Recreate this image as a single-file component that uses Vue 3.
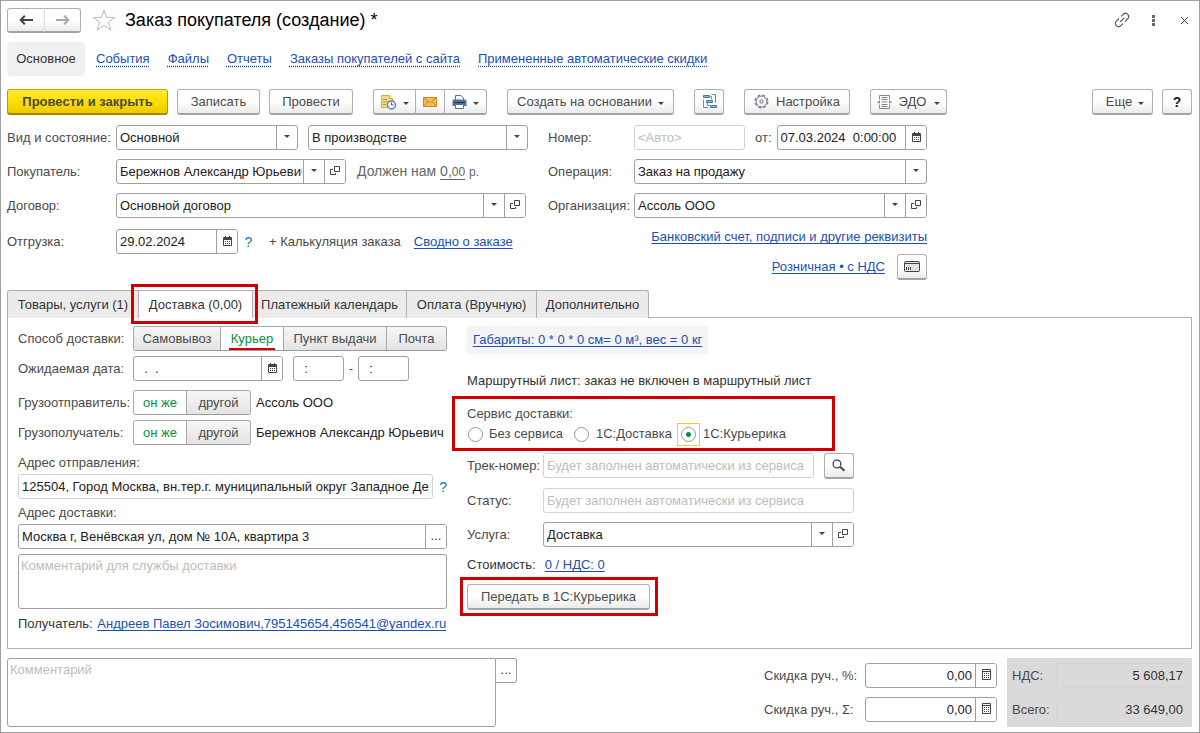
<script setup>
import { ref } from 'vue'

const navLinks = ['События', 'Файлы', 'Отчеты', 'Заказы покупателей с сайта', 'Примененные автоматические скидки']
const deliveryMethods = ['Самовывоз', 'Курьер', 'Пункт выдачи', 'Почта']
const services = ['Без сервиса', '1С:Доставка', '1С:Курьерика']
const parties = ['он же', 'другой']

const method = ref('Курьер')
const service = ref('1С:Курьерика')
const sender = ref('он же')
const receiver = ref('он же')
const date = ref('29.02.2024')
const orderDate = ref('07.03.2024  0:00:00')
const expected = ref('  .  .')
const timeFrom = ref('  :')
const timeTo = ref('  :')
const addressFrom = ref('125504, Город Москва, вн.тер.г. муниципальный округ Западное Дегунино')
const addressTo = ref('Москва г, Венёвская ул, дом № 10А, квартира 3')
const discountPercent = ref('0,00')
const discountSum = ref('0,00')
</script>

<template>
  <svg class="defs" aria-hidden="true">
    <symbol id="i-caret" viewBox="0 0 6 3"><path d="M0 0h6L3 3z" fill="#444" /></symbol>
    <symbol id="i-open" viewBox="0 0 10 10">
      <path d="M4.500 .5h5v5h-5zM3 3.500H.5v5h5V7" fill="none" stroke="#444" />
    </symbol>
    <symbol id="i-cal" viewBox="0 0 9 10">
      <path d="M1 1h1V0h1v1h3V0h1v1h1q1 0 1 1v7q0 1-1 1H1q-1 0-1-1V2q0-1 1-1z" fill="#444" />
      <path d="M1 4h7v5H1z" fill="#fff" />
      <path d="M2 5.500h5M2 7.500h5" stroke="#444" stroke-dasharray="1 1" />
    </symbol>
    <symbol id="i-calc" viewBox="0 0 9 11">
      <path d="M.5 .5h8v10h-8zM.5 2.500h8" fill="none" stroke="#444" />
      <path d="M2 4.500h5M2 6.500h5M2 8.500h5" stroke="#444" stroke-dasharray="1 1" />
    </symbol>
  </svg>

  <main class="window">
    <header class="title-bar">
      <div class="group-btn history">
        <button class="btn" aria-label="Назад">
          <svg width="14" height="10" viewBox="0 0 14 10"><path d="M14 5H3M5.800 .8 1.700 5l4.100 4.200" fill="none" stroke="#444" stroke-width="2" /></svg>
        </button>
        <button class="btn" aria-label="Вперед">
          <svg width="14" height="10" viewBox="0 0 14 10"><path d="M0 5h11M8.200 .8 12.300 5 8.200 9.200" fill="none" stroke="#aaa" stroke-width="2" /></svg>
        </button>
      </div>
      <button class="plain" aria-label="В избранное">
        <svg width="24" height="22" viewBox="0 0 24 22"><path d="M12 1l2.700 7.400h8L16.300 13.200l2.500 7.900L12 16.400l-6.800 4.700 2.500-7.900L1.300 8.400h8z" fill="#fff" stroke="#b4bac2" /></svg>
      </button>
      <h1>Заказ покупателя (создание) *</h1>
      <div class="window-tools">
        <button class="plain" aria-label="Ссылка">
          <svg width="16" height="16" viewBox="0 0 16 16"><g fill="none" stroke="#555" stroke-width="1.200" transform="rotate(-45 8 8)"><path d="M7 4.800H3.200a3.200 3.200 0 0 0 0 6.400H6M9 11.200h3.800a3.200 3.200 0 0 0 0-6.400H10M5 8h6" /></g></svg>
        </button>
        <button class="plain" aria-label="Меню">
          <svg width="3" height="11" viewBox="0 0 3 11"><path d="M0 0h3v3H0zM0 4h3v3H0zM0 8h3v3H0z" fill="#666" /></svg>
        </button>
        <button class="plain" aria-label="Закрыть">
          <svg width="7" height="7" viewBox="0 0 7 7"><path d="M0 0l7 7M7 0L0 7" stroke="#444" /></svg>
        </button>
      </div>
    </header>

    <nav class="nav">
      <a class="current" href="#main">Основное</a>
      <a v-for="link in navLinks" :key="link" class="dotted" href="#">{{ link }}</a>
    </nav>

    <div class="toolbar">
      <div class="set">
        <button class="btn primary">Провести и закрыть</button>
        <button class="btn save">Записать</button>
        <button class="btn post">Провести</button>
      </div>
      <div class="group-btn">
        <button class="btn wide-icon" aria-label="Напоминание">
          <svg width="17" height="16" viewBox="0 0 17 16">
            <path d="M1.500 1.500h8l3 3v9h-11z" fill="#f3dc85" stroke="#d2ae45" /><path d="M9.500 1.500v3h3" fill="#fff3bd" stroke="#d2ae45" />
            <path d="M3 5.500h4M3 8h5M3 10.500h3" stroke="#b9933a" />
            <circle cx="11.500" cy="11" r="4" fill="#eef6ff" stroke="#5285b4" stroke-width="1.400" /><path d="M11.500 8.500V11h2" fill="none" stroke="#d23" />
          </svg>
          <svg class="caret" width="6" height="3"><use href="#i-caret" /></svg>
        </button>
        <button class="btn mail" aria-label="Письмо">
          <svg width="14" height="10" viewBox="0 0 14 10"><path d="M.5 .5h13v9H.5z" fill="#f6bd5a" stroke="#c98820" /><path d="M.5 .5 7 6l6.500-5.500M.5 9.500l4.500-5M13.500 9.500 9 4.500" fill="none" stroke="#c98820" /></svg>
        </button>
        <button class="btn wide-icon" aria-label="Печать">
          <svg width="15" height="14" viewBox="0 0 15 14">
            <path d="M3.500 5V.5h5.500L11.500 3v2" fill="#fff" stroke="#56738f" /><path d="M2 4.500h11q1.500 0 1.500 1.500v5H.5V6Q.5 4.500 2 4.500z" fill="#4d7599" />
            <path d="M2 7.500h11" stroke="#22384d" /><path d="M3.500 9.500h8v4h-8z" fill="#fff" stroke="#56738f" />
          </svg>
          <svg class="caret" width="6" height="3"><use href="#i-caret" /></svg>
        </button>
      </div>
      <button class="btn base">Создать на основании <svg class="caret" width="6" height="3"><use href="#i-caret" /></svg></button>
      <button class="btn square" aria-label="Структура подчиненности">
        <svg width="15" height="15" viewBox="0 0 15 15">
          <g fill="#8fb8d0" stroke="#427a9e"><path d="M1.500 1.500h6v2h-6zM4.500 6.500h6v2h-6zM8.500 11.500h6v2h-6z" /></g>
          <path d="M9.500 .5h4V9M1.500 5.500v8H6M7.500 2.500h2v3M5.500 9v2.500h2" fill="none" stroke="#5f93b5" />
        </svg>
      </button>
      <button class="btn settings">
        <svg width="15" height="15" viewBox="0 0 15 15"><circle cx="7.500" cy="7.500" r="6.400" fill="none" stroke="#777c85" stroke-width="1.200" stroke-dasharray="3 2.030" /><circle cx="7.500" cy="7.500" r="5.400" fill="#f6f6f6" stroke="#777c85" /><circle cx="7.500" cy="7.500" r="1.600" fill="none" stroke="#666b75" /></svg>
        Настройка
      </button>
      <button class="btn edo">
        <svg width="15" height="14" viewBox="0 0 15 14"><g fill="none" stroke="#888"><path d="M2.500 4.500v-4h10v4M2.500 9.500v4h10v-4M4.500 2.500h6M4.500 4.500h6M4.500 7h6M4.500 9.500h6M4.500 11.500h6M0 7h3M12 7h3" /><path d="M3 9V5L1 7zM12 9V5l2 2z" fill="#888" stroke="none" /></g></svg>
        ЭДО <svg class="caret" width="6" height="3"><use href="#i-caret" /></svg>
      </button>
      <div class="set end">
        <button class="btn more">Еще <svg class="caret" width="6" height="3"><use href="#i-caret" /></svg></button>
        <button class="btn square help">?</button>
      </div>
    </div>

    <section class="head-form">
      <div class="stack">
        <div class="row">
          <label class="cap" for="kind">Вид и состояние:</label>
          <span class="field kind"><span class="sel"><select id="kind"><option>Основной</option></select><i><svg width="6" height="3"><use href="#i-caret" /></svg></i></span></span>
          <span class="field state"><span class="sel"><select aria-label="Состояние"><option>В производстве</option></select><i><svg width="6" height="3"><use href="#i-caret" /></svg></i></span></span>
        </div>
        <div class="row">
          <label class="cap" for="buyer">Покупатель:</label>
          <span class="field buyer">
            <span class="sel"><select id="buyer"><option>Бережнов Александр Юрьевич</option></select><i><svg width="6" height="3"><use href="#i-caret" /></svg></i></span>
            <button class="cell" aria-label="Открыть покупателя"><svg width="10" height="10"><use href="#i-open" /></svg></button>
          </span>
          <span class="debt">Должен нам <u>0,<small>00</small></u> <small>р.</small></span>
        </div>
        <div class="row">
          <label class="cap" for="contract">Договор:</label>
          <span class="field contract">
            <span class="sel"><select id="contract"><option>Основной договор</option></select><i><svg width="6" height="3"><use href="#i-caret" /></svg></i></span>
            <button class="cell" aria-label="Открыть договор"><svg width="10" height="10"><use href="#i-open" /></svg></button>
          </span>
        </div>
        <div class="row shipping">
          <label class="cap" for="ship">Отгрузка:</label>
          <span class="field ship">
            <input id="ship" v-model="date" />
            <button class="cell" aria-label="Календарь"><svg width="9" height="10"><use href="#i-cal" /></svg></button>
          </span>
          <button class="hint" aria-label="Подсказка">?</button>
          <button class="text-btn">+ Калькуляция заказа</button>
          <a href="#">Сводно о заказе</a>
        </div>
      </div>

      <div class="stack">
        <div class="row">
          <label class="cap narrow" for="number">Номер:</label>
          <span class="field off number"><input id="number" placeholder="&lt;Авто&gt;" readonly /></span>
          <label class="from" for="odate">от:</label>
          <span class="field fill">
            <input id="odate" v-model="orderDate" class="pre" />
            <button class="cell" aria-label="Календарь"><svg width="9" height="10"><use href="#i-cal" /></svg></button>
          </span>
        </div>
        <div class="row">
          <label class="cap narrow" for="oper">Операция:</label>
          <span class="field fill"><span class="sel"><select id="oper"><option>Заказ на продажу</option></select><i><svg width="6" height="3"><use href="#i-caret" /></svg></i></span></span>
        </div>
        <div class="row">
          <label class="cap narrow" for="org">Организация:</label>
          <span class="field fill">
            <span class="sel"><select id="org"><option>Ассоль ООО</option></select><i><svg width="6" height="3"><use href="#i-caret" /></svg></i></span>
            <button class="cell" aria-label="Открыть организацию"><svg width="10" height="10"><use href="#i-open" /></svg></button>
          </span>
        </div>
        <div class="requisites"><a href="#">Банковский счет, подписи и другие реквизиты</a></div>
        <div class="pricing">
          <a href="#">Розничная • с НДС</a>
          <button class="btn square" aria-label="Оплата картой">
            <svg width="16" height="11" viewBox="0 0 16 11"><rect x=".5" y=".5" width="15" height="10" rx="1" fill="#e2e2e2" stroke="#444" /><path d="M1 2.500h14" stroke="#444" /><path d="M2.500 6v3M4.500 6v3M6.500 6v3" stroke="#444" /></svg>
          </button>
        </div>
      </div>
    </section>

    <div class="tabs" role="tablist">
      <button class="tab t1" role="tab">Товары, услуги (1)</button>
      <button class="tab t2 active marked" role="tab" aria-selected="true">Доставка (0,00)</button>
      <button class="tab t3" role="tab">Платежный календарь</button>
      <button class="tab t4" role="tab">Оплата (Вручную)</button>
      <button class="tab t5" role="tab">Дополнительно</button>
    </div>

    <section class="panel" role="tabpanel">
      <div class="left">
        <div class="row">
          <span class="cap mid">Способ доставки:</span>
          <div class="segments methods">
            <label v-for="m in deliveryMethods" :key="m" :class="{ on: method === m }">
              <input v-model="method" type="radio" name="method" :value="m" /><span>{{ m }}</span>
            </label>
          </div>
        </div>
        <div class="row gap5">
          <label class="cap mid" for="expected">Ожидаемая дата:</label>
          <span class="field expected">
            <input id="expected" v-model="expected" class="pre" />
            <button class="cell" aria-label="Календарь"><svg width="9" height="10"><use href="#i-cal" /></svg></button>
          </span>
          <span class="field time"><input v-model="timeFrom" class="pre" aria-label="Время с" /></span>
          <span class="dash">-</span>
          <span class="field time"><input v-model="timeTo" class="pre" aria-label="Время по" /></span>
        </div>
        <div class="row gap9">
          <span class="cap mid">Грузоотправитель:</span>
          <div class="segments pair">
            <label v-for="p in parties" :key="p" :class="{ on: sender === p }">
              <input v-model="sender" type="radio" name="sender" :value="p" /><span>{{ p }}</span>
            </label>
          </div>
          <span class="party">Ассоль ООО</span>
        </div>
        <div class="row gap5">
          <span class="cap mid">Грузополучатель:</span>
          <div class="segments pair">
            <label v-for="p in parties" :key="p" :class="{ on: receiver === p }">
              <input v-model="receiver" type="radio" name="receiver" :value="p" /><span>{{ p }}</span>
            </label>
          </div>
          <span class="party">Бережнов Александр Юрьевич</span>
        </div>
        <label class="line first" for="from">Адрес отправления:</label>
        <div class="row">
          <span class="field off fill"><input id="from" v-model="addressFrom" /></span>
          <button class="hint tight" aria-label="Подсказка">?</button>
        </div>
        <label class="line" for="to">Адрес доставки:</label>
        <div class="row">
          <span class="field fill"><input id="to" v-model="addressTo" /><button class="cell" aria-label="Выбрать адрес">...</button></span>
        </div>
        <textarea class="note" aria-label="Комментарий для службы доставки" placeholder="Комментарий для службы доставки"></textarea>
        <div class="recipient">Получатель: <a href="#">Андреев Павел Зосимович,795145654,456541@yandex.ru</a></div>
      </div>

      <div class="right">
        <a class="dims" href="#">Габариты: 0 * 0 * 0 см= 0 м³, вес = 0 кг</a>
        <p class="route">Маршрутный лист: заказ не включен в маршрутный лист</p>
        <div class="service marked" role="radiogroup" aria-labelledby="service-title">
          <div id="service-title" class="service-title">Сервис доставки:</div>
          <div class="radios">
            <label v-for="s in services" :key="s" :class="{ focus: service === s }">
              <span class="ring"><input v-model="service" type="radio" name="service" :value="s" /></span>{{ s }}
            </label>
          </div>
        </div>
        <div class="row">
          <label class="cap short" for="track">Трек-номер:</label>
          <span class="field off fill"><input id="track" placeholder="Будет заполнен автоматически из сервиса" readonly /></span>
          <button class="btn square search" aria-label="Найти">
            <svg width="14" height="13" viewBox="0 0 14 13"><circle cx="5" cy="5" r="3.900" fill="none" stroke="#444" stroke-width="1.300" /><path d="M8 7.800l4.500 4" stroke="#444" stroke-width="2" /></svg>
          </button>
        </div>
        <div class="row gap10">
          <label class="cap short" for="status">Статус:</label>
          <span class="field off fill"><input id="status" placeholder="Будет заполнен автоматически из сервиса" readonly /></span>
        </div>
        <div class="row gap9">
          <label class="cap short" for="item">Услуга:</label>
          <span class="field fill">
            <span class="sel"><select id="item"><option>Доставка</option></select><i><svg width="6" height="3"><use href="#i-caret" /></svg></i></span>
            <button class="cell" aria-label="Открыть услугу"><svg width="10" height="10"><use href="#i-open" /></svg></button>
          </span>
        </div>
        <div class="cost"><span>Стоимость:</span><a href="#">0 / НДС: 0</a></div>
        <button class="btn send marked">Передать в 1С:Курьерика</button>
      </div>
    </section>

    <footer class="bottom">
      <div class="comment">
        <textarea aria-label="Комментарий" placeholder="Комментарий"></textarea>
        <button class="cell" aria-label="Редактировать комментарий">...</button>
      </div>
      <div class="discounts">
        <label for="dp">Скидка руч., %:</label>
        <span class="field"><input id="dp" v-model="discountPercent" /><button class="cell" aria-label="Калькулятор"><svg width="9" height="11"><use href="#i-calc" /></svg></button></span>
        <label for="ds">Скидка руч., Σ:</label>
        <span class="field"><input id="ds" v-model="discountSum" /><button class="cell" aria-label="Калькулятор"><svg width="9" height="11"><use href="#i-calc" /></svg></button></span>
      </div>
      <dl class="totals">
        <dt>НДС:</dt><dd>5 608,17</dd>
        <dt>Всего:</dt><dd>33 649,00</dd>
      </dl>
    </footer>
  </main>
</template>

<style>
body { background: #fff; }
</style>

<style scoped>
*, *::before, *::after { box-sizing: border-box; }
.defs { position: absolute; width: 0; height: 0; }
.window {
  min-height: 100vh;
  padding: 6px 7px 5px 6px;
  border: 1px solid #a0a0a0;
  font: 13px/16px "Liberation Sans", Arial, sans-serif;
  color: #4a4a4a;
}
button, input, select, textarea { font: inherit; color: inherit; margin: 0; }
button { padding: 0; cursor: pointer; white-space: nowrap; }
svg { flex: none; }
a { color: #1a4fb5; text-decoration: underline; text-underline-offset: 2px; text-decoration-skip-ink: none; white-space: nowrap; }
.plain, .hint, .text-btn { border: 0; background: none; }
.plain { display: flex; }

.btn {
  display: flex; align-items: center; justify-content: center;
  height: 26px; flex: none;
  border: 1px solid #b0b0b0; border-bottom: 2px solid #a4a4a4; border-radius: 3px;
  background: linear-gradient(#fff 50%, #ebebeb);
}
.caret { margin: 3px 0 0 6px; }
.group-btn { display: flex; flex: none; }
.group-btn .btn { border-radius: 0; margin-left: -1px; }
.group-btn .btn:first-child { border-radius: 3px 0 0 3px; margin-left: 0; }
.group-btn .btn:last-child { border-radius: 0 3px 3px 0; }

.title-bar { display: flex; align-items: center; height: 26px; }
.history { margin-right: 11px; }
.history .btn { width: 38px; height: 25px; }
.history .btn:last-child { width: 37px; border-left-color: #ddd; }
h1 { margin: 0 0 0 9px; font-size: 18px; line-height: 22px; font-weight: 400; color: #000; }
.window-tools { display: flex; align-items: center; margin: 0 4px 0 auto; gap: 22px; }
.window-tools .plain:last-child { margin-left: 4px; }

.nav { display: flex; align-items: center; height: 34px; margin-top: 9px; gap: 18px; }
.nav .current { display: flex; align-items: center; justify-content: center; width: 78px; height: 34px; margin-right: -7px; border-radius: 4px; background: #f0f0f0; color: #333; text-decoration: none; }
.dotted { text-decoration-style: dotted; text-underline-offset: 3px; }

.toolbar { display: flex; gap: 20px; margin-top: 13px; }
.set { display: flex; gap: 9px; }
.end { margin-left: auto; }
.primary { width: 161px; font-weight: 700; border-color: #c5a800 #b59b00 #a08900; background: linear-gradient(#ffe93a, #ffe000 50%, #ecc900); }
.save { width: 83px; }
.post { width: 84px; }
.wide-icon { width: 43px; }
.mail { width: 30px; }
.base { width: 167px; }
.square { width: 30px; }
.settings { width: 106px; gap: 7px; }
.edo { width: 77px; gap: 2px; }
.edo svg:first-child { margin-right: 5px; }
.more { width: 61px; padding-left: 5px; }
.help { font-size: 14px; font-weight: 700; color: #222; }

.head-form { display: grid; grid-template-columns: minmax(0, 520px) minmax(0, 379px); column-gap: 21px; margin-top: 10px; }
.stack { display: flex; flex-direction: column; gap: 9px; }
.row { display: flex; align-items: center; height: 25px; }
.shipping { margin-top: 2px; }
.cap { flex: none; width: 109px; white-space: nowrap; }
.narrow { width: 86px; }
.mid { width: 115px; }
.short { width: 76px; }

.field { display: flex; flex: none; height: 25px; border: 1px solid #a0a0a0; border-radius: 3px; background: #fff; color: #222; overflow: hidden; }
.field input { flex: 1; min-width: 0; width: 0; border: 0; padding: 0 3px; background: none; outline: 0; }
.off { border-color: #d3d3d3; }
.pre { white-space: pre; }
::placeholder { color: #bdbdbd; opacity: 1; }
.sel { position: relative; display: flex; flex: 1; min-width: 0; }
.sel select { width: 100%; padding: 0 22px 0 3px; border: 0; background: none; appearance: none; outline: 0; text-overflow: clip; }
.sel i {
  position: absolute; inset: 0 0 0 auto; width: 21px; padding-bottom: 2px;
  display: flex; align-items: center; justify-content: center;
  border-left: 1px solid #a0a0a0; pointer-events: none;
}
.cell { display: flex; align-items: center; justify-content: center; flex: none; width: 21px; padding-bottom: 2px; border: 0; border-left: 1px solid #a0a0a0; background: #fff; color: #333; }
.fill { flex: 1; min-width: 0; }
.kind { width: 182px; }
.state { width: 220px; margin-left: 10px; }
.buyer { width: 230px; }
.contract { width: 410px; }
.ship { width: 122px; }
.number { width: 111px; }
.from { margin: 0 5px 0 10px; }
.debt { margin-left: 11px; font-size: 14px; color: #666; white-space: nowrap; }
.debt small { font-size: 12px; }
.debt u { text-underline-offset: 3px; }
.hint { width: 21px; font-size: 14px; color: #0a79c0; }
.text-btn { margin: 0 13px 0 10px; }
.requisites { margin-top: 1px; text-align: right; line-height: 18px; }
.pricing { display: flex; align-items: center; justify-content: flex-end; gap: 12px; margin-top: -1px; }

.tabs { display: flex; margin-top: 10px; }
.tab { height: 28px; margin-right: -1px; border: 1px solid #b0b0b0; border-bottom: 0; background: #ebebeb; color: #333; }
.tab:first-child { border-top-left-radius: 3px; }
.tab:last-child { border-top-right-radius: 3px; }
.t1 { width: 132px; }
.t2 { width: 115px; }
.t3 { width: 155px; }
.t4 { width: 131px; }
.t5 { width: 113px; }
.tab.active { background: #fff; z-index: 2; }

/* Highlight frame around the controls that need attention */
.marked { position: relative; }
.marked::after { content: ""; position: absolute; border: 3px solid #d00000; pointer-events: none; }
.tab.marked::after { inset: -7px -6px -6px -8px; }
.service.marked::after { inset: -9px -1px -6px -15px; }
.send.marked::after { inset: -8px -9px -8px -8px; }

.panel { display: grid; grid-template-columns: minmax(0, 429px) minmax(0, 387px); column-gap: 20px; margin-top: -1px; padding: 8px 10px; border: 1px solid #b0b0b0; min-height: 332px; }
.gap5 { margin-top: 5px; }
.gap9 { margin-top: 9px; }
.gap10 { margin-top: 10px; }
.segments { display: flex; flex: none; height: 25px; border: 1px solid #a8a8a8; border-bottom-color: #999; border-radius: 3px; overflow: hidden; }
.segments label { position: relative; display: flex; align-items: center; justify-content: center; background: linear-gradient(#f6f6f6, #e4e4e4); cursor: pointer; }
.segments label + label { border-left: 1px solid #a8a8a8; }
.segments input { position: absolute; opacity: 0; }
.segments .on { background: #fff; color: #00923f; }
.methods { display: grid; grid-template-columns: 86px 63px 103px 1fr; width: 314px; }
.methods .on span { box-shadow: 0 3px #d00000; line-height: 18px; padding: 0 2px; }
.pair { width: 118px; }
.pair label:first-child { width: 52px; }
.pair label:last-child { flex: 1; }
.party { margin-left: 5px; color: #222; white-space: nowrap; }
.expected { width: 150px; }
.time { width: 51px; }
.expected + .time { margin-left: 10px; }
.dash { width: 14px; text-align: center; }
.line { display: block; line-height: 16px; margin: 6px 0 3px; }
.line.first { margin-top: 10px; }
.hint.tight { width: 14px; text-align: right; }
.note, .comment textarea { display: block; width: 100%; padding: 3px 2px; border: 1px solid #a0a0a0; border-radius: 3px; resize: none; outline: 0; }
.note { height: 55px; margin-top: 5px; }
.recipient { margin-top: 7px; color: #333; white-space: nowrap; }
.recipient a { margin-left: 1px; }

.right { display: flex; flex-direction: column; }
.dims { align-self: flex-start; padding: 6px; background: #f4f4f4; }
.route { margin: 19px 0 0; color: #333; }
.service { margin: 16px 20px 8px 0; }
.service-title { height: 18px; line-height: 18px; }
.radios { display: flex; align-items: center; height: 22px; }
.radios label { display: flex; align-items: center; margin-right: 11px; white-space: nowrap; }
.ring { display: flex; align-items: center; justify-content: center; width: 16px; height: 22px; margin-right: 6px; }
.radios .focus { margin-left: -6px; }
.focus .ring { width: 23px; height: 23px; margin-right: 3px; border: 1px solid #ffc629; }
.ring input { width: 15px; height: 15px; border: 1px solid #999; border-radius: 50%; appearance: none; background: #fff; flex: none; }
.ring input:checked { background: radial-gradient(circle, #00923f 2px, #fff 3px); }
.search { margin-left: 10px; }
.cost { display: flex; gap: 9px; margin-top: 10px; color: #333; }
.send { width: 183px; margin-top: 11px; }

.bottom { display: flex; margin-top: 9px; align-items: flex-start; }
.comment { display: flex; align-items: flex-start; width: 510px; }
.comment textarea { height: 69px; flex: 1; border-radius: 3px 0 3px 3px; }
.comment .cell { height: 25px; border: 1px solid #a0a0a0; border-left: 0; border-radius: 0 3px 3px 0; }
.discounts { display: grid; grid-template-columns: 101px 132px; row-gap: 9px; align-items: center; margin: 5px 10px 0 auto; white-space: nowrap; }
.discounts input { text-align: right; }
.totals { display: grid; grid-template-columns: 44px 131px; row-gap: 9px; width: 185px; margin: 0; padding: 5px 0 5px 5px; background: #dadada; }
.totals dt { line-height: 25px; }
.totals dd { margin: 0; padding-right: 3px; height: 25px; line-height: 23px; border: 1px solid #d5d5d5; border-radius: 3px; color: #333; text-align: right; }
</style>
